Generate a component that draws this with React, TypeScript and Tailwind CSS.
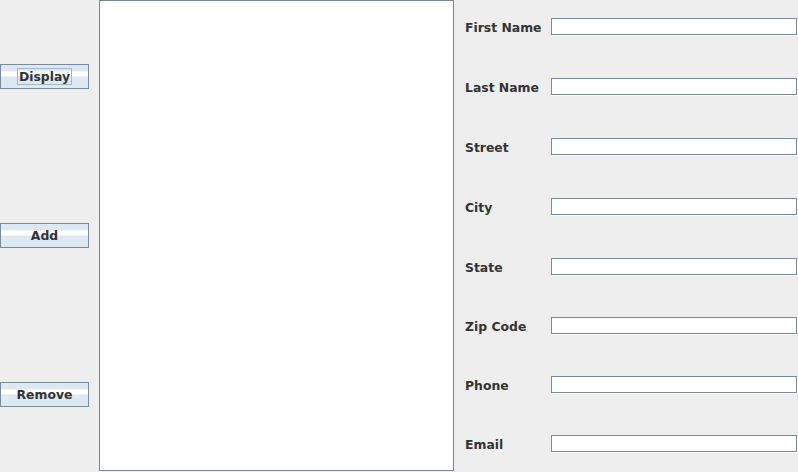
import React from "react";

const font = { fontFamily: '"DejaVu Sans", sans-serif' };

function JButton({ label, focused, top }: { label: string; focused?: boolean; top: string }) {
  return (
    <div
      className={`${top} shrink-0 w-[89px] h-[25px] border border-[#7a8a99] flex items-center justify-center bg-[linear-gradient(to_bottom,#dde8f3_0%,#dde8f3_24%,#ffffff_30%,#ffffff_46%,#dde8f3_54%,#dde8f3_100%)]`}
    >
      <span
        className={`text-[12.4px] font-bold text-[#333333] leading-[15px] px-[1px] ${focused ? "border border-[#a3b8cc]" : "border border-transparent"}`}
      >
        {label}
      </span>
    </div>
  );
}

function Row({ label, h }: { label: string; h: string }) {
  return (
    <div className={`${h} shrink-0 flex items-start`}>
      <div className="w-[97px] pl-[11px] pt-[20px] text-[12.4px] font-bold text-[#333333] leading-[15px]">{label}</div>
      <div className="mt-[18px] relative w-[247px] h-[18px]">
        <div className="absolute left-[1px] top-[1px] w-[246px] h-[17px] border border-white" />
        <div className="absolute left-0 top-0 w-[246px] h-[17px] border border-[#7a8a99] bg-white" />
      </div>
    </div>
  );
}

export default function App() {
  const rows: [string, string][] = [
    ["First Name", "h-[60px]"],
    ["Last Name", "h-[60px]"],
    ["Street", "h-[60px]"],
    ["City", "h-[60px]"],
    ["State", "h-[59px]"],
    ["Zip Code", "h-[59px]"],
    ["Phone", "h-[59px]"],
    ["Email", "h-[59px]"],
  ];
  return (
    <div className="w-[798px] h-[472px] bg-[#eeeeee] flex overflow-hidden" style={font}>
      <div className="w-[99px] shrink-0 flex flex-col">
        <JButton label="Display" focused top="mt-[64px]" />
        <JButton label="Add" top="mt-[134px]" />
        <JButton label="Remove" top="mt-[134px]" />
      </div>
      <div className="w-[355px] h-[471px] shrink-0 border border-[#7a8a99] bg-white" />
      <div className="flex flex-col">
        {rows.map(([l, h]) => (
          <Row key={l} label={l} h={h} />
        ))}
      </div>
    </div>
  );
}
